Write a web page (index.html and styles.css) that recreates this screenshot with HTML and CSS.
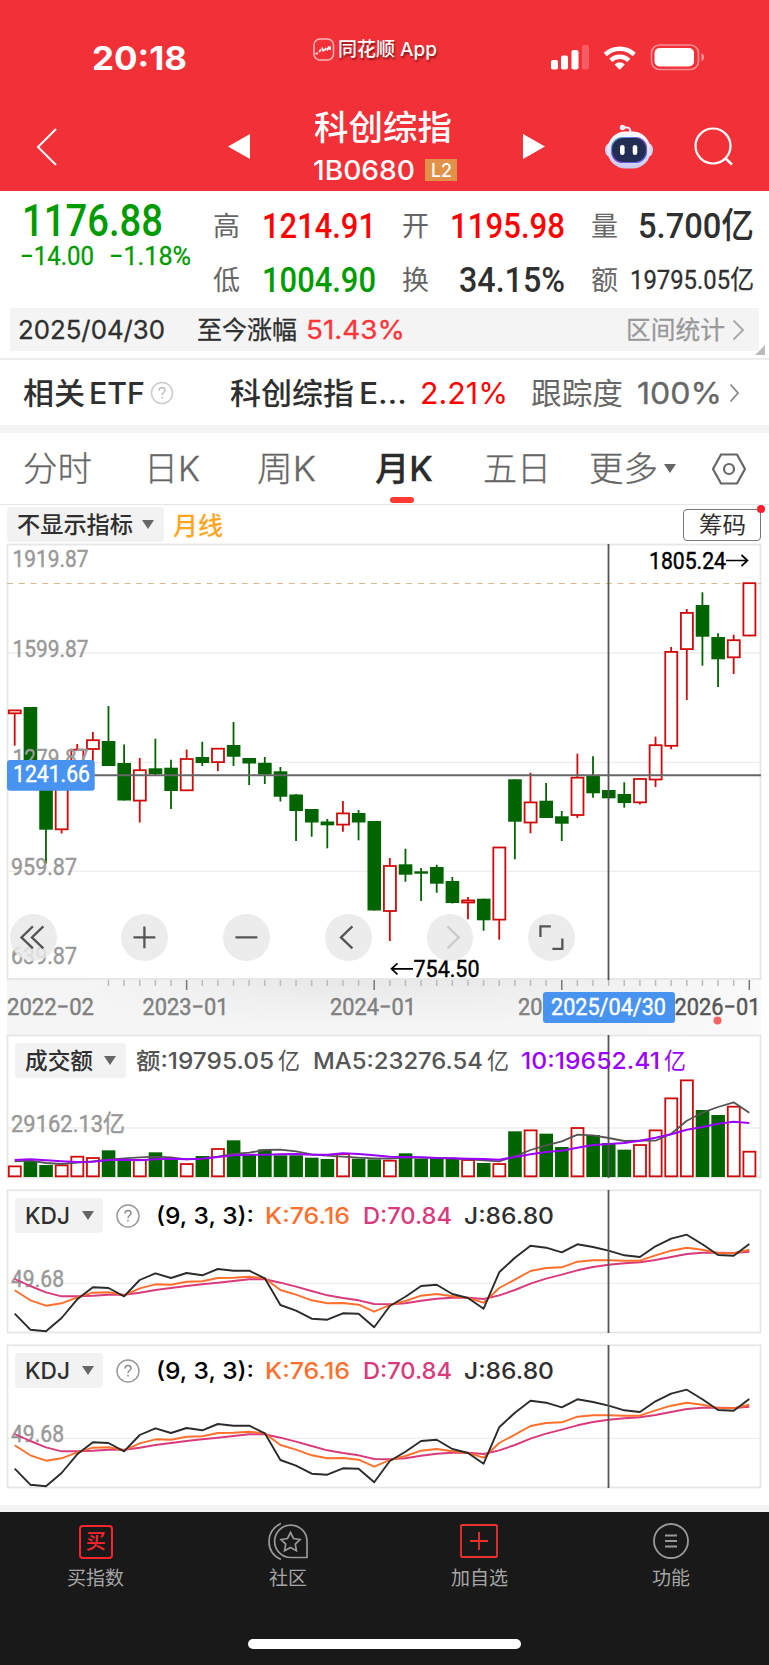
FILE: index.html
```html
<!DOCTYPE html>
<html lang="zh-CN">
<head>
<meta charset="utf-8">
<title>科创综指 1B0680</title>
<link rel="stylesheet" href="styles.css">
</head>
<body>
<header class="header">
  <div class="status">
    <span class="fit time" data-w="95">20:18</span>
    <div class="brand">
      <svg width="22" height="23" viewBox="0 0 22 23"><rect x="1" y="1" width="19.500" height="21" rx="6" fill="none" stroke="#fff" stroke-opacity=".65" stroke-width="1.500"/><path d="M2.500 15.500h2.500M6 14l2-2.500M9 9.500l1.500 4M11.500 12.500l1.500-2.500M14 12.500l2-4M17 8.500v3.500" fill="none" stroke="#fff" stroke-width="1.700"/></svg>
      <span class="fit" data-w="99">同花顺 App</span>
    </div>
    <svg class="signal" width="154" height="28" viewBox="550 44 154 28">
      <g fill="#fff"><rect x="551" y="60" width="7" height="9.500" rx="2"/><rect x="561" y="55.500" width="7" height="14" rx="2"/><rect x="571.500" y="50" width="7" height="19.500" rx="2"/><rect x="582" y="45" width="7" height="24.500" rx="2" opacity=".22"/></g>
      <g fill="none" stroke="#fff" stroke-width="4.500"><path d="M605.300 54.500a21 21 0 0 1 29 0"/><path d="M610.800 60.300a13 13 0 0 1 18 0"/></g>
      <path d="M614.500 64.500q5.200-4.500 10.400 0l-5.200 5.200z" fill="#fff"/>
      <rect x="651.500" y="45" width="47" height="24.500" rx="8" fill="none" stroke="#fff" stroke-opacity=".45" stroke-width="1.600"/>
      <rect x="654.500" y="48" width="39.500" height="18.500" rx="5" fill="#fff"/><path d="M701.500 53.500q2.500.5 2.500 3.700t-2.500 3.800z" fill="#fff" opacity=".5"/>
    </svg>
  </div>
  <nav class="nav">
    <svg class="back" width="22" height="38" viewBox="0 0 22 38"><path d="M20 1L2 19l18 18" fill="none" stroke="#fff" stroke-width="2"/></svg>
    <svg class="prev" width="22" height="26" viewBox="0 0 22 26"><path d="M22 0v25L0 12.500z" fill="#fff"/></svg>
    <div class="heading">
      <h1 class="fit" data-w="138">科创综指</h1>
      <div class="code"><span class="fit" data-w="102">1B0680</span><b class="level"><span class="fit" data-w="21">L2</span></b></div>
    </div>
    <svg class="next" width="22" height="26" viewBox="0 0 22 26"><path d="M0 0v25l22-12.500z" fill="#fff"/></svg>
    <svg class="robot" width="50" height="46" viewBox="0 0 50 46">
      <defs><linearGradient id="shell" x2="0" y2="1"><stop offset="0" stop-color="#fff"/><stop offset="1" stop-color="#c9c9f2"/></linearGradient><linearGradient id="rim" x2="1" y2="1"><stop offset="0" stop-color="#46c6e8"/><stop offset=".5" stop-color="#8040d8"/><stop offset="1" stop-color="#4a70e8"/></linearGradient></defs>
      <path d="M18 4.500h5q3.500 0 3.500 5" fill="none" stroke="#eef" stroke-width="2"/><circle cx="18.500" cy="4.500" r="2.700" fill="#f0f0ff"/>
      <ellipse cx="5" cy="27" rx="4" ry="6.500" fill="#d4d3f4"/><ellipse cx="45" cy="27" rx="4" ry="6.500" fill="#d4d3f4"/>
      <rect x="3.500" y="8.500" width="43" height="37" rx="18" fill="url(#shell)"/>
      <rect x="7.500" y="14.500" width="35" height="25" rx="11" fill="#232c52" stroke="url(#rim)" stroke-width="1.200"/>
      <rect x="16" y="22" width="4.600" height="10" rx="2.300" fill="#fff"/><rect x="28.700" y="22" width="4.600" height="10" rx="2.300" fill="#fff"/>
    </svg>
    <svg class="search" width="40" height="40" viewBox="0 0 40 40"><circle cx="19" cy="19" r="17.500" fill="none" stroke="#fff" stroke-width="2.200"/><path d="M31 31l7 6.500" stroke="#fff" stroke-width="2.500"/></svg>
  </nav>
</header>

<section class="quote">
  <div class="price">
    <div class="last"><span class="fit" data-w="141">1176.88</span></div>
    <div class="delta"><span class="fit" data-w="74">−14.00</span><span class="fit" data-w="82">−1.18%</span></div>
  </div>
  <dl class="stats">
    <dt>高</dt><dd class="up"><span class="fit" data-w="114">1214.91</span></dd>
    <dt>开</dt><dd class="up"><span class="fit" data-w="115">1195.98</span></dd>
    <dt>量</dt><dd><span class="fit" data-w="116">5.700亿</span></dd>
    <dt>低</dt><dd class="down"><span class="fit" data-w="114">1004.90</span></dd>
    <dt>换</dt><dd><span class="fit" data-w="106">34.15%</span></dd>
    <dt>额</dt><dd class="small"><span class="fit" data-w="124">19795.05亿</span></dd>
  </dl>
</section>

<section class="range">
  <span class="fit" data-w="147">2025/04/30</span>
  <span class="fit since" data-w="100">至今涨幅</span>
  <span class="fit gain" data-w="99">51.43%</span>
  <span class="fit stat-link" data-w="99">区间统计</span>
  <svg width="13" height="22" viewBox="0 0 13 22"><path d="M1.500 1.500l9.500 9.500-9.500 9.500" fill="none" stroke="#aaa" stroke-width="2"/></svg>
</section>
<div class="corner"></div>

<section class="etf">
  <span class="fit" data-w="62">相关</span><span class="fit etf-word" data-w="56">ETF</span>
  <svg class="help" width="24" height="24" viewBox="0 0 24 24"><circle cx="12" cy="12" r="10.500" fill="none" stroke="#ccc" stroke-width="1.500"/><path d="M9 9.500q.3-3 3-3t3 2.500q0 1.500-1.500 2.500T12 14M12 15.800v1.700" fill="none" stroke="#bbb" stroke-width="1.500"/></svg>
  <span class="fit name" data-w="124">科创综指</span><span class="fit name-tail" data-w="48">E…</span>
  <span class="fit pct" data-w="88">2.21%</span>
  <span class="fit track" data-w="92">跟踪度</span>
  <span class="fit full" data-w="85">100%</span>
  <svg class="go" width="11" height="20" viewBox="0 0 11 20"><path d="M1.500 1.500l7.500 8.500-7.500 8.500" fill="none" stroke="#888" stroke-width="1.800"/></svg>
</section>

<nav class="tabs">
  <span class="fit" data-w="69">分时</span>
  <span class="fit t2" data-w="56">日K</span>
  <span class="fit t3" data-w="59">周K</span>
  <span class="tab-on"><span class="fit" data-w="58">月K</span></span>
  <span class="fit t5" data-w="68">五日</span>
  <span class="fit t6" data-w="69">更多</span>
  <i class="tri tab-tri"></i>
  <svg class="hex" width="36" height="34" viewBox="0 0 36 34"><path d="M10 2.500h16L34 17l-8 14.500H10L2 17z" fill="none" stroke="#666" stroke-width="2.200"/><circle cx="18" cy="17" r="5" fill="none" stroke="#666" stroke-width="2.200"/></svg>
</nav>

<div class="indicator">
  <button class="pick"><span class="fit" data-w="116">不显示指标</span><i class="tri"></i></button>
  <span class="fit period" data-w="50">月线</span>
  <span class="chips"><span class="fit" data-w="47">筹码</span></span>
</div>

<section class="main-chart">
  <svg id="candles" width="769" height="492" viewBox="0 543 769 492"></svg>
  <div class="controls">
    <svg viewBox="-23.500 -23.500 47 47"><path d="M-.5-11L-12 .0-.5 11M10-11L-1.500 0 10 11"/></svg>
    <svg viewBox="-23.500 -23.500 47 47"><path d="M-11 0h22M0-11v22"/></svg>
    <svg viewBox="-23.500 -23.500 47 47"><path d="M-11 0h22"/></svg>
    <svg viewBox="-23.500 -23.500 47 47"><path d="M4-11L-7.500 0 4 11"/></svg>
    <svg class="off" viewBox="-23.500 -23.500 47 47"><path d="M-3-11L8.500 0-3 11"/></svg>
    <svg viewBox="-23.500 -23.500 47 47"><path d="M-11-.5V-11H-.5M11 1v10.500H1"/></svg>
  </div>
</section>

<section class="panel volume">
  <div class="legend">
    <button class="pick"><span class="fit" data-w="68">成交额</span><i class="tri"></i></button>
    <span class="fit v1" data-w="138">额:19795.05</span><span class="fit yi" data-w="22">亿</span>
    <span class="fit v2" data-w="170">MA5:23276.54</span><span class="fit yi" data-w="22">亿</span>
    <span class="fit v3" data-w="139">10:19652.41</span><span class="fit yi purple" data-w="22">亿</span>
  </div>
  <svg id="volume" width="769" height="145" viewBox="0 1034 769 145"></svg>
</section>

<section class="panel kdj">
  <div class="legend">
    <button class="pick"><span class="fit" data-w="45">KDJ</span><i class="tri"></i></button>
    <svg class="help2" width="24" height="24" viewBox="0 0 24 24"><circle cx="12" cy="12" r="11" fill="none" stroke="#999" stroke-width="1.500"/><path d="M9 9.500q.3-3 3-3t3 2.500q0 1.500-1.500 2.500T12 14M12 15.800v1.700" fill="none" stroke="#888" stroke-width="1.500"/></svg>
    <span class="fit args" data-w="98">(9, 3, 3):</span>
    <span class="fit k" data-w="85">K:76.16</span>
    <span class="fit d" data-w="89">D:70.84</span>
    <span class="fit j" data-w="90">J:86.80</span>
  </div>
  <svg class="kdj-plot" width="769" height="145" viewBox="0 1189 769 145"></svg>
</section>

<section class="panel kdj">
  <div class="legend">
    <button class="pick"><span class="fit" data-w="45">KDJ</span><i class="tri"></i></button>
    <svg class="help2" width="24" height="24" viewBox="0 0 24 24"><circle cx="12" cy="12" r="11" fill="none" stroke="#999" stroke-width="1.500"/><path d="M9 9.500q.3-3 3-3t3 2.500q0 1.500-1.500 2.500T12 14M12 15.800v1.700" fill="none" stroke="#888" stroke-width="1.500"/></svg>
    <span class="fit args" data-w="98">(9, 3, 3):</span>
    <span class="fit k" data-w="85">K:76.16</span>
    <span class="fit d" data-w="89">D:70.84</span>
    <span class="fit j" data-w="90">J:86.80</span>
  </div>
  <svg class="kdj-plot" width="769" height="145" viewBox="0 1189 769 145"></svg>
</section>

<footer class="footer">
  <div class="actions">
    <a><span class="buy">买</span><span class="fit" data-w="57">买指数</span></a>
    <a><svg width="42" height="40" viewBox="0 0 42 40"><g fill="none" stroke="#999" stroke-width="1.700"><path d="M14 2.500Q2 8 2 20.500T14 38.500"/><path d="M40 36.500H24A16.200 16.200 0 1 1 40 20.500z"/><path d="M23.500 11.500l3 6 6.500 1-4.700 4.600 1.100 6.600-5.900-3.200-5.900 3.200 1.100-6.600-4.700-4.600 6.500-1z"/></g></svg><span class="fit" data-w="38">社区</span></a>
    <a><svg width="42" height="40" viewBox="0 0 42 40"><g fill="none" stroke="#f0302f" stroke-width="1.800"><rect x="3" y="4" width="36" height="32" rx="1"/><path d="M12 20h18M21 11v18"/></g></svg><span class="fit" data-w="57">加自选</span></a>
    <a><svg width="42" height="40" viewBox="0 0 42 40"><g fill="none" stroke="#999" stroke-width="1.800"><circle cx="21" cy="20" r="17"/><path d="M15 14.500h12M15 20h12M15 25.500h12"/></g></svg><span class="fit" data-w="38">功能</span></a>
  </div>
  <div class="home"></div>
</footer>
<script src="chart.js"></script>
</body>
</html>
```

FILE: styles.css
```css
* { box-sizing: border-box; }
body { margin: 0; width: 769px; height: 1665px; overflow: hidden; background: #fff; color: #2f2f2f; font-family: Inter, "Noto Sans CJK SC", sans-serif; line-height: 1; }
svg { display: block; flex: none; }
button { border: 0; padding: 0; font: inherit; color: inherit; }
.fit { display: inline-block; flex: none; white-space: nowrap; transform-origin: 0 50%; }

.header { height: 191px; background: #f23037; color: #fff; }
.status { height: 102px; padding: 14px 0 0 92px; display: flex; align-items: center; }
.time { font-size: 33px; font-weight: 700; }
.brand { margin: -17px 0 0 126px; display: flex; align-items: center; gap: 3px; font-size: 19px; font-weight: 500; text-shadow: 1px 2px 2px rgba(60, 0, 0, .6); }
.signal { margin-left: 113px; }
.nav { height: 89px; padding-left: 36px; display: flex; align-items: center; }
.prev { margin-left: 170px; }
.heading { margin-left: 64px; width: 145px; height: 89px; padding-top: 7px; }
.heading h1 { margin: 0; font-size: 34px; line-height: 37px; font-weight: 500; }
.code { display: flex; align-items: center; height: 28px; margin-top: 10px; font-size: 27px; font-weight: 500; margin-left: -1px; }
.level { margin-left: 10px; width: 32px; height: 22px; background: #e29148; font-size: 19px; font-weight: 500; display: flex; align-items: center; justify-content: center; }
.next { margin-left: 64px; }
.robot { margin: -2px 0 0 59px; }
.search { margin-left: 40px; }

.quote { height: 117px; display: flex; font-family: Roboto, "Noto Sans CJK SC", sans-serif; font-weight: 500; }
.price { width: 190px; padding: 8px 0 0 22px; color: #009b00; }
.last { font-size: 44px; }
.delta { margin-left: -2px; display: flex; gap: 15px; font-size: 26px; font-weight: 400; -webkit-text-stroke: .3px; }
.stats { margin: 8px 0 0 24px; display: grid; grid-template: 54px 54px / 27px 135px 54px 135px 54px 135px; width: 542px; }
.stats dt { font-size: 27px; font-weight: 400; color: #666; align-self: center; margin: 1px 1px 0 -1px; padding-top: 1px; white-space: nowrap; }
.stats dd { margin: 0; font-size: 35px; align-self: center; display: flex; justify-content: flex-end; }
.stats dt:nth-of-type(3n+2), .stats dt:nth-of-type(3n) { justify-self: end; }
.stats .small { font-size: 26px; font-weight: 400; -webkit-text-stroke: .3px; }
.stats .up { color: #f00; }
.stats .down { color: #009b00; }

.range { margin: 0 10px; height: 43px; padding: 1px 0 0 8px; display: flex; align-items: center; background: #f4f4f4; font-size: 25.500px; -webkit-text-stroke: .3px; }
.since { margin-left: 32px; }
.gain { margin-left: 9px; color: #fb3538; }
.stat-link { margin-left: 221px; color: #999; }
.range svg { margin-left: 7px; }
.corner { height: 9px; border-bottom: 2px solid #ececec; position: relative; }
.corner::after { content: ""; position: absolute; right: 4px; top: -6px; width: 0; height: 0; border: solid transparent; border-width: 0 0 10px 10px; border-bottom-color: #bbb; }

.etf { height: 73px; padding-left: 23px; display: flex; align-items: center; border-bottom: 8px solid #f4f4f4; font-size: 30px; font-weight: 500; }
.etf-word { margin-left: 4px; }
.help { margin-left: 5px; }
.name { margin-left: 56px; }
.name-tail { margin-left: 5px; }
.pct { margin-left: 13px; color: #f00; font-weight: 400; }
.track { margin-left: 23px; color: #666; font-weight: 400; }
.full { margin-left: 14px; color: #666; font-weight: 400; -webkit-text-stroke: .3px; }
.go { margin-left: 7px; }

.tabs { height: 72px; padding-left: 23px; display: flex; align-items: center; color: #666; font-size: 34px; font-weight: 300; -webkit-text-stroke: .3px; border-bottom: 1px solid #e6e6e6; }
.t2 { margin-left: 52px; }
.t3 { margin-left: 57px; }
.tab-on { margin-left: 59px; height: 71px; display: flex; align-items: center; position: relative; color: #2b2b2b; font-weight: 500; }
.tab-on::after { content: ""; position: absolute; left: 15px; bottom: 1px; width: 24px; height: 6px; border-radius: 3px; background: #fb3a32; }
.t5 { margin-left: 50px; }
.t6 { margin-left: 38px; }
.tri { display: block; width: 0; height: 0; border: solid transparent; border-width: 9px 6px 0; border-top-color: #666; }
.tab-tri { margin-left: 6px; }
.hex { margin-left: 35px; }

.indicator { height: 38px; padding: 2px 0 0 7px; display: flex; align-items: flex-start; }
.pick { height: 35px; border-radius: 4px; background: #f2f2f2; display: flex; align-items: center; gap: 10px; padding: 0 10px; font-size: 23px; font-weight: 500; }
.pick .fit { padding-top: 1px; }
.indicator .pick { width: 157px; padding-right: 8px; gap: 9px; }
.period { margin: 7px 0 0 9px; font-size: 25px; color: #ffa51e; font-weight: 500; }
.chips { margin: 2px 0 0 460px; width: 78px; height: 32px; border: 1.500px solid #777; border-radius: 4px; display: flex; align-items: center; justify-content: center; font-size: 23px; position: relative; }
.chips::after { content: ""; position: absolute; right: -5px; top: -5px; width: 8px; height: 8px; border-radius: 50%; background: #fb1f30; }

.main-chart { height: 491px; position: relative; }
.controls { position: absolute; left: 10px; top: 371px; display: flex; gap: 55px; }
.controls svg { width: 46.800px; height: 46.800px; border-radius: 50%; background: rgba(233, 233, 233, .85); fill: none; stroke: #555; stroke-width: 2.300; }
.controls svg:first-child { margin-right: 9.500px; }
.controls .off { stroke: #ccc; }
.axis { font-family: Roboto, "Noto Sans CJK SC", sans-serif; font-size: 24px; }

.panel { position: relative; height: 155px; }
.legend { position: absolute; left: 15px; top: 9px; display: flex; align-items: center; font-size: 23px; font-weight: 500; }
.legend > .fit { padding-top: 2px; }
.volume .pick { width: 111px; gap: 11px; }
.kdj .pick { width: 88px; gap: 12px; }
.v1 { margin-left: 10px; color: #555; }
.v2 { margin-left: 13px; color: #555; }
.v3 { margin-left: 12px; color: #9b00ff; }
.yi { margin-left: 4px; color: #555; font-weight: 400; }
.yi.purple { color: #9b00ff; }
.help2 { margin-left: 13px; }
.args { margin-left: 16px; color: #000; }
.k { margin-left: 11px; color: #ff6f2c; }
.d { margin-left: 13px; color: #d93a7c; }
.j { margin-left: 12px; }

.footer { margin-top: 6px; height: 160px; background: #191919; border-top: 7px solid #f4f4f4; color: #a6a6a6; }
.actions { display: grid; grid-template-columns: repeat(4, 191.700px); height: 127px; padding-top: 9px; }
.actions a { display: flex; flex-direction: column; align-items: center; gap: 8px; font-size: 19px; }
.buy { width: 34px; height: 34px; margin: 4px 0 2px; border: 2px solid #fb2530; border-radius: 4px; color: #fb2530; font-size: 20px; font-weight: 500; display: flex; align-items: center; justify-content: center; }
.home { width: 273px; height: 10px; border-radius: 5px; background: #fff; margin: 0 auto; }
```

FILE: chart.js
```js
// Squeeze each label to its design width; the layout box follows the scaled width.
document.querySelectorAll('.fit').forEach(function (el) {
  var w = +el.dataset.w, n = el.getBoundingClientRect().width;
  el.style.transform = 'scaleX(' + w / n + ')';
  el.style.marginRight = (w - n) + 'px';
});

var X0 = 14.7, STEP = 15.63, RED = '#d00a0a', GREEN = '#006400';
function cx(i) { return X0 + STEP * i; }
function line(x1, y1, x2, y2, c, w, extra) {
  return '<line x1="' + x1 + '" y1="' + y1 + '" x2="' + x2 + '" y2="' + y2 + '" stroke="' + c + '" stroke-width="' + (w || 1) + '" ' + (extra || '') + '/>';
}
function label(x, y, w, t, c, extra) {
  c = c || '#999';
  return '<text class="axis" x="' + x + '" y="' + y + '" textLength="' + w + '" lengthAdjust="spacingAndGlyphs" fill="' + c + '" stroke="' + c + '" stroke-width=".45" ' + (extra || '') + '>' + t + '</text>';
}
function bar(i, top, bottom, up) {
  var x = cx(i) - 6.7;
  return up
    ? '<rect x="' + (x + .8) + '" y="' + (top + .7) + '" width="12" height="' + Math.max(bottom - top - 1.4, .6) + '" fill="#fff" stroke="' + RED + '" stroke-width="1.800"/>'
    : '<rect x="' + x + '" y="' + top + '" width="13.600" height="' + (bottom - top) + '" fill="' + GREEN + '"/>';
}
function curve(ys, c, w) {
  return '<polyline fill="none" stroke="' + c + '" stroke-width="' + w + '" stroke-linejoin="round" points="' +
    ys.map(function (y, i) { return cx(i).toFixed(1) + ',' + (1030 + y / 3).toFixed(1); }).join(' ') + '"/>';
}
function frame(y1, y2) {
  return '<rect x="7.500" y="' + y1 + '" width="753" height="' + (y2 - y1) + '" fill="none" stroke="#e6e6e6" stroke-width="1.800"/>';
}

// [up, high, body top, body bottom, low]
var K = [
[1,710,709.7,714,745.7],[0,707,707,770,770],[0,778,778,829.7,863.5],[1,775,775,830,833.5],[1,744,749,762,762],[1,732,739.5,749.7,763],
[0,706,741,766,766],[0,744.5,763,800.5,800.5],[1,758,769.5,801.3,822.5],[0,738.7,768.3,774,776],[0,759.7,767.7,791,809],[1,749.5,758.3,791,791],
[0,741.8,757,763,766],[1,748,748,762.8,771],[0,722,745,756.7,766],[0,758,758,763.5,785],[0,757,762.8,774.5,784],[0,767,771.3,796.7,801.5],
[0,794,794.5,811,841],[0,809,809,822.5,836.7],[0,819,821.5,825.3,848.3],[1,801,812.7,825.3,831.7],[0,810,813,822.5,840.3],[0,821,821,910.5,910.5],
[1,858,865.3,911.7,941],[0,848.7,864.3,874.7,881.7],[0,868,871.3,873.7,901],[0,864.7,867,883.7,892.7],[0,877,881,903,903.5],[1,897,899.7,903.2,919.3],
[0,898.7,898.7,920.3,930.7],[1,847,846.8,920.3,939.7],[0,779.3,779.3,821.7,859.3],[1,772.7,801.7,823.2,833.3],[0,783,800.7,818,818],[0,811,816.3,823.7,841],
[1,753.7,777,815.7,818],[0,756.3,775.3,793.3,797.7],[0,790,790,798.3,798.3],[0,782.3,794,803,807.7],[1,778.3,778.3,803,804.5],[1,736.7,744.5,780.2,787],
[1,647,651.2,746.5,749.3],[1,609,612.2,649.8,700],[0,592.3,605,636.7,665.7],[0,633.3,637,659.3,687],[1,634.7,639.5,658,674],[1,582.7,582.5,636.2,636.2]];

(function () {
  var s = '<defs><linearGradient id="shade" x2="0" y2="1"><stop offset="0" stop-color="#e8e8e8"/><stop offset=".8" stop-color="#f5f5f5"/></linearGradient>' +
    '<linearGradient id="fade"><stop offset=".1" stop-color="#f5f5f5"/><stop offset=".4" stop-color="#f5f5f5" stop-opacity="0"/><stop offset=".6" stop-color="#f5f5f5" stop-opacity=".1"/><stop offset="1" stop-color="#fafafa"/></linearGradient></defs>';
  s += '<rect x="7" y="979" width="754" height="56" fill="url(#shade)"/><rect x="7" y="979" width="754" height="56" fill="url(#fade)"/>';
  [653, 762.3, 871.4].forEach(function (y) { s += line(7, y, 761, y, '#eee', 1.3); });
  s += frame(544.5, 979);
  s += line(7, 583.5, 761, 583.5, '#d9b98c', 1.1, 'stroke-dasharray="6 5.740"');
  K.forEach(function (k, i) {
    s += line(cx(i), k[1], cx(i), k[4], k[0] ? RED : GREEN, 1.8) + bar(i, k[2], k[3], k[0]);
    if (i > 5) s += line(cx(i), 980, cx(i), i % 12 === 11 ? 990 : 986, i % 12 === 11 ? '#777' : '#bbb', 1.5);
  });
  s += label(12.500, 567, 76, '1919.87') + label(12.500, 656.5, 76, '1599.87') + label(12.500, 765.7, 76, '1279.87') + label(11, 874.7, 66, '959.87') + label(11, 964.3, 66, '639.87');
  s += line(608.5, 544, 608.5, 980, '#555', 1.8) + line(7, 775.2, 761, 775.2, '#666', 1.9);
  s += '<rect x="7" y="760" width="87.700" height="30.700" rx="3" fill="#4893ef"/>' + label(13, 782.3, 77, '1241.66', '#fff');
  s += label(649, 569, 77, '1805.24', '#000') + label(413.5, 977, 66, '754.50', '#000');
  s += '<path d="M726 560.500h21M741.500 555l6 5.500-6 5.500M413 968.800h-21M397.500 963.300l-6 5.500 6 5.500" fill="none" stroke="#000" stroke-width="1.700"/>';
  s += label(7, 1014.5, 87, '2022−02', '#808080') + label(142.500, 1014.5, 86, '2023−01', '#808080') + label(330, 1014.5, 86, '2024−01', '#808080') + label(518, 1014.5, 86, '2025−01', '#808080');
  s += '<rect x="543" y="992" width="132" height="31" rx="3" fill="#4893ef"/>' + label(551, 1015, 115, '2025/04/30', '#fff') + label(674.5, 1014.5, 86, '2026−01', '#555');
  s += '<circle cx="717.500" cy="1020.500" r="4" fill="#f56463"/>';
  document.getElementById('candles').innerHTML = s;
})();

(function () {
  var tops = [407,392,405,404,378,382,361,387,388,367,386,400,378,355,331,372,358,376,376,383,387,370,386,388,390,370,386,386,386,388,399,400,304,299,311,351,292,315,339,359,343,299,203,149,240,255,228,363];
  var s = line(7, 1128, 761, 1128, '#eee', 1.3) + frame(1035.5, 1177.500);
  tops.forEach(function (t, i) { s += bar(i, 1030 + t / 3, 1177, K[i][0]); });
  s += curve([394,392,399,402,398,394,389,385,382,380,382,388,385,380,372,368,360,359,364,373,377,380,383,385,386,383,383,384,385,388,391,394,379,360,346,334,314,316,324,333,332,332,311,272,248,231,217,248], '#555', 1.8);
  s += curve([390,388,391,394,396,395,390,389,391,388,386,388,386,381,376,374,374,373,372,374,374,370,372,376,380,381,382,384,385,386,387,389,381,373,366,362,353,345,342,339,332,323,313,299,291,281,275,279], '#9b00ff', 2);
  s += line(608.5, 1035, 608.5, 1178, '#555', 1.8) + label(11, 1131.5, 114, '29162.13亿');
  document.getElementById('volume').innerHTML = s;
})();

document.querySelectorAll('.kdj-plot').forEach(function (el) {
  var s = line(7, 1283.3, 761, 1283.3, '#eee', 1.3) + frame(1190.3, 1332.5) + label(11, 1286.5, 53, '49.68');
  s += curve([747,768,787,799,799,797,794,794,788,780,774,768,763,758,753,748,748,758,770,783,796,804,811,822,823,820,812,806,803,803,807,796,780,761,746,734,721,711,704,700,697,690,681,672,668,668,669,665], '#d93a7c', 1.9);
  s += curve([781,811,827,820,802,788,787,796,775,763,764,755,754,744,743,740,745,780,794,811,820,819,824,845,825,813,797,792,799,804,818,774,749,723,714,712,695,691,691,692,692,676,662,653,659,669,670,659], '#ff6f2c', 1.9);
  s += curve([851,899,904,864,808,772,774,799,750,730,744,729,736,717,722,722,745,825,842,866,869,850,851,892,828,800,768,764,792,804,836,727,683,647,653,667,643,651,662,676,681,649,626,614,643,675,677,642], '#2b2b2b', 1.9);
  s += line(608.5, 1190, 608.5, 1333, '#555', 1.8);
  el.innerHTML = s;
});
```
